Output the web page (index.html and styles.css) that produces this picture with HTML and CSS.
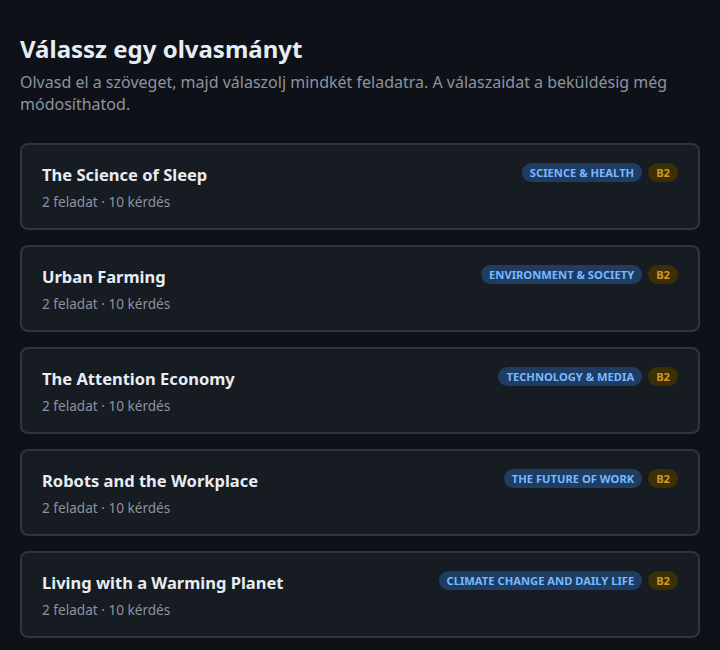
FILE: index.html
```html
<!DOCTYPE html>
<html lang="hu">
<head>
    <meta charset="UTF-8">
    <meta name="viewport" content="width=device-width, initial-scale=1.0">
    <title>Válassz egy olvasmányt</title>
    <link rel="stylesheet" href="styles.css">
</head>
<body>
    <div class="container">
        <h1>Válassz egy olvasmányt</h1>
        <p class="intro">Olvasd el a szöveget, majd válaszolj mindkét feladatra. A válaszaidat a beküldésig még módosíthatod.</p>

        <div class="reading-list">
            <div class="reading-card">
                <div class="card-text">
                    <h2>The Science of Sleep</h2>
                    <p class="meta">2 feladat · 10 kérdés</p>
                </div>
                <div class="tags">
                    <span class="tag topic">Science &amp; Health</span>
                    <span class="tag level">B2</span>
                </div>
            </div>
            <div class="reading-card">
                <div class="card-text">
                    <h2>Urban Farming</h2>
                    <p class="meta">2 feladat · 10 kérdés</p>
                </div>
                <div class="tags">
                    <span class="tag topic">Environment &amp; Society</span>
                    <span class="tag level">B2</span>
                </div>
            </div>
            <div class="reading-card">
                <div class="card-text">
                    <h2>The Attention Economy</h2>
                    <p class="meta">2 feladat · 10 kérdés</p>
                </div>
                <div class="tags">
                    <span class="tag topic">Technology &amp; Media</span>
                    <span class="tag level">B2</span>
                </div>
            </div>
            <div class="reading-card">
                <div class="card-text">
                    <h2>Robots and the Workplace</h2>
                    <p class="meta">2 feladat · 10 kérdés</p>
                </div>
                <div class="tags">
                    <span class="tag topic">The Future of Work</span>
                    <span class="tag level">B2</span>
                </div>
            </div>
            <div class="reading-card">
                <div class="card-text">
                    <h2>Living with a Warming Planet</h2>
                    <p class="meta">2 feladat · 10 kérdés</p>
                </div>
                <div class="tags">
                    <span class="tag topic">Climate Change and Daily Life</span>
                    <span class="tag level">B2</span>
                </div>
            </div>
        </div>
    </div>
</body>
</html>
```

FILE: styles.css
```css
* {
    margin: 0;
    padding: 0;
    box-sizing: border-box;
    font-family: 'Noto Sans', 'Open Sans', sans-serif;
}

body {
    background-color: #0e1117;
    color: #e6edf3;
}

.container {
    padding: 33px 20px 20px;
}

h1 {
    font-size: 24px;
    font-weight: 700;
    line-height: 32px;
    color: #e6edf3;
}

.intro {
    margin-top: 6px;
    font-size: 16px;
    line-height: 22px;
    color: #8b949e;
}

.reading-list {
    margin-top: 28px;
    display: flex;
    flex-direction: column;
    gap: 15px;
}

.reading-card {
    display: flex;
    justify-content: space-between;
    align-items: flex-start;
    padding: 18px 20px 16px;
    background-color: #171b22;
    border: 2px solid #30353d;
    border-radius: 8px;
    cursor: pointer;
}

.card-text h2 {
    font-size: 16.5px;
    font-weight: 700;
    line-height: 24px;
    color: #e6edf3;
}

.meta {
    margin-top: 5px;
    font-size: 13.6px;
    line-height: 20px;
    color: #8b949e;
}

.tags {
    display: flex;
    gap: 6px;
}

.tag {
    display: inline-block;
    padding: 0 8px;
    border-radius: 10px;
    font-size: 11.2px;
    font-weight: 700;
    line-height: 19px;
    text-transform: uppercase;
}

.tag.topic {
    background-color: #1f3d63;
    color: #79b8ff;
}

.tag.level {
    background-color: #3b2f05;
    color: #d29922;
}
```
